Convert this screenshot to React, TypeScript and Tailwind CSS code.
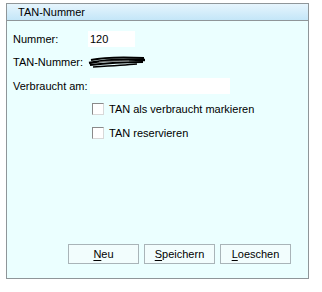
import React from "react";

function Checkbox({ label }: { label: string }) {
  return (
    <div className="flex items-center h-[12px]">
      <div className="w-[12px] h-[12px] border border-[#8a8a8a] border-r-[#d8d8d8] border-b-[#d8d8d8] bg-white box-border" />
      <span className="ml-[5px] leading-none">{label}</span>
    </div>
  );
}

function Btn({ first, rest }: { first: string; rest: string }) {
  return (
    <div className="w-[71px] h-[20px] border border-[#a9b4b8] bg-[#f2fdfd] flex items-center justify-center box-border">
      <span>
        <span className="underline underline-offset-[2px]">{first}</span>
        {rest}
      </span>
    </div>
  );
}

export default function App() {
  return (
    <div
      className="w-[322px] h-[292px] bg-white pl-[6px] pt-[3px] text-[11px] text-black"
      style={{ fontFamily: "Tahoma, 'Liberation Sans', Arial, sans-serif" }}
    >
      <div className="w-[303px] h-[276px] border border-[#8f9699] bg-[#ebffff] flex flex-col box-border">
        <div className="h-[17px] border-b border-[#8f9699] bg-gradient-to-b from-[#e6f5fd] to-[#c4e6f8] pl-[11px] flex items-center shrink-0">
          TAN-Nummer
        </div>
        <div className="pl-[6px] pt-[10px] flex flex-col">
          <div className="flex items-center h-[16px]">
            <div className="w-[75px]">Nummer:</div>
            <div className="w-[47px] h-[16px] bg-white flex items-center pl-[2px]">120</div>
          </div>
          <div className="flex items-center h-[16px] mt-[7px]">
            <div className="w-[75px]">TAN-Nummer:</div>
            <svg width="60" height="14" viewBox="0 0 60 14" className="ml-[-1px]">
              <path d="M4 5 C 18 2, 34 2, 57 3" stroke="#000" strokeWidth="2.2" fill="none" />
              <path d="M2 8 C 16 5, 36 4, 58 5" stroke="#000" strokeWidth="2.4" fill="none" />
              <path d="M3 10 C 20 8, 40 7, 56 7" stroke="#000" strokeWidth="2" fill="none" />
              <path d="M6 12 C 22 11, 38 10, 50 9" stroke="#000" strokeWidth="1.6" fill="none" />
              <path d="M12 7 C 22 6, 32 6, 42 6" stroke="#777" strokeWidth="1" fill="none" />
            </svg>
          </div>
          <div className="flex items-center h-[16px] mt-[8px]">
            <div className="w-[77px]">Verbraucht am:</div>
            <div className="w-[140px] h-[16px] bg-white" />
          </div>
          <div className="pl-[79px] mt-[9px] flex flex-col gap-[12px]">
            <Checkbox label="TAN als verbraucht markieren" />
            <Checkbox label="TAN reservieren" />
          </div>
        </div>
        <div className="flex-1" />
        <div className="flex gap-[5px] pl-[61px] pb-[14px]">
          <Btn first="N" rest="eu" />
          <Btn first="S" rest="peichern" />
          <Btn first="L" rest="oeschen" />
        </div>
      </div>
    </div>
  );
}
